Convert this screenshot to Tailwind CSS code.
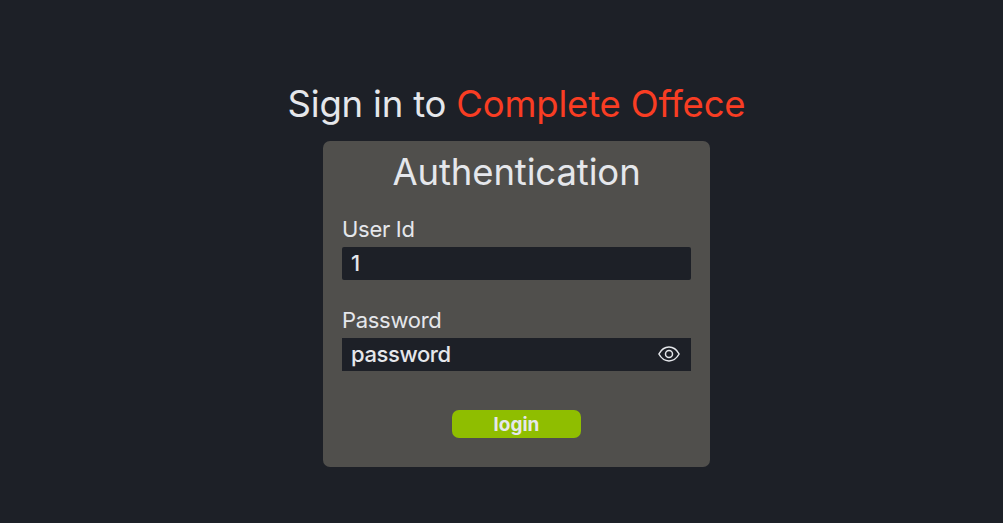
<!DOCTYPE html>
<html lang="en">
<head>
<meta charset="utf-8">
<title>Sign in</title>
<script src="https://cdn.jsdelivr.net/npm/@tailwindcss/browser@4"></script>
</head>
<body class="h-screen overflow-hidden bg-[#1d2027] font-['Inter',sans-serif] text-[#e5e7eb]">
<main class="flex flex-col items-center pl-[30px] pt-[80px]">
  <h1 class="h-[61px] whitespace-nowrap text-[36.5px] leading-[49px] tracking-[-0.19px]">Sign in to <span class="text-[#f93d23]">Complete Offece</span></h1>
  <form class="flex h-[326px] w-[387px] flex-col rounded-[7px] bg-[#504f4c] px-[19px] pt-[8px]">
    <h2 class="-mb-px text-center text-[36.5px] leading-[47px] tracking-[-0.12px]">Authentication</h2>
    <label class="mt-[19px] h-[33px] text-[22px] leading-[30px] tracking-[-0.3px]">User Id</label>
    <div class="flex h-[33px] items-center rounded-[2px] bg-[#1d2027] px-[9px] text-[22px] font-medium">1</div>
    <label class="mt-[25px] h-[33px] text-[22px] leading-[30px] tracking-[-0.3px]">Password</label>
    <div class="flex h-[33px] items-center justify-between bg-[#1d2027] pl-[9px] pr-[11px] text-[22px] font-medium tracking-[-0.4px]"><span>password</span>
      <svg class="mb-[2px] h-4 w-[22px]" viewBox="0 0 22 16" fill="none" stroke="currentColor" stroke-width="1.5"><path d="M.9 8C3.5 3.3 7 1.1 11 1.1S18.5 3.3 21.1 8C18.5 12.7 15 14.9 11 14.9S3.5 12.7 .9 8Z"/><circle cx="11" cy="8" r="3.5"/></svg>
    </div>
    <button type="button" class="mt-[39px] h-7 w-[129px] self-center rounded-[7px] bg-[#8fbe00] pt-px text-[19px] leading-7 font-bold">login</button>
  </form>
</main>
</body>
</html>
